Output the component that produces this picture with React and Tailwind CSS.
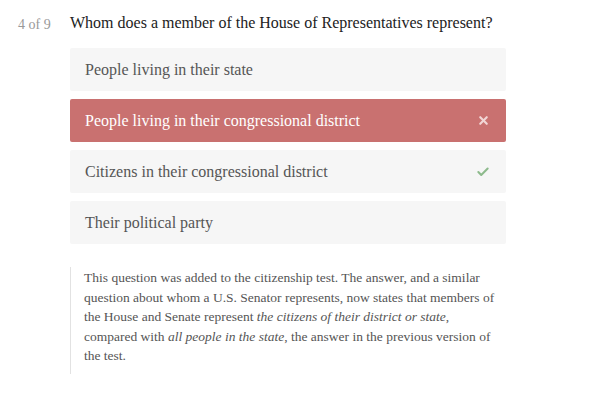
import { Check, X } from 'lucide-react';

const options = [
  { text: 'People living in their state', state: 'idle' },
  { text: 'People living in their congressional district', state: 'wrong' },
  { text: 'Citizens in their congressional district', state: 'right' },
  { text: 'Their political party', state: 'idle' },
];

function Option({ text, state }) {
  const wrong = state === 'wrong';
  return (
    <div
      className={
        'flex h-[43px] items-center justify-between rounded-[2px] pl-[15px] pr-[16px] text-[16px] ' +
        (wrong ? 'bg-[#c97170] text-white' : 'bg-[#f6f6f6] text-[#555]')
      }
    >
      <span>{text}</span>
      {wrong && <X size={13} strokeWidth={4} className="text-[#f1d6d5]" />}
      {state === 'right' && <Check size={14} strokeWidth={3.5} className="text-[#8dba8c]" />}
    </div>
  );
}

export default function App() {
  return (
    <div className="h-[400px] w-[600px] bg-white font-['Liberation_Serif',serif]">
      <div className="flex pt-[11px]">
        <div className="w-[70px] pl-[18px] pt-[3px] text-[14px] text-[#999]">4 of 9</div>
        <div className="w-[436px]">
          <h1 className="text-[16px] leading-[24px] text-[#222]">
            Whom does a member of the House of Representatives represent?
          </h1>
          <div className="mt-[13px] flex flex-col gap-[8px]">
            {options.map((o) => (
              <Option key={o.text} {...o} />
            ))}
          </div>
          <div className="mt-[23px] w-[432px] border-l border-[#e2e2e2] pl-[13px] pt-[1px] pb-[8px] text-[13.5px] leading-[19.5px] text-[#555]">
            This question was added to the citizenship test. The answer, and a similar question about
            whom a U.S. Senator represents, now states that members of the House and Senate represent{' '}
            <em>the citizens of their district or state</em>, compared with{' '}
            <em>all people in the state</em>, the answer in the previous version of the test.
          </div>
        </div>
      </div>
    </div>
  );
}
